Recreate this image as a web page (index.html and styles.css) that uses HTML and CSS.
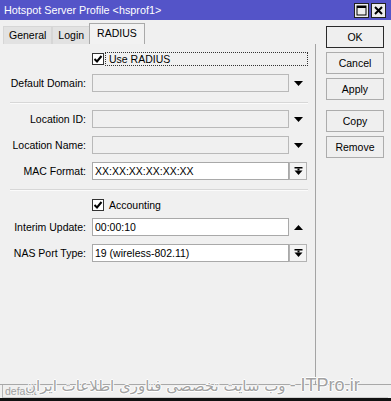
FILE: index.html
```html
<!DOCTYPE html>
<html>
<head>
<meta charset="utf-8">
<link rel="stylesheet" href="styles.css">
</head>
<body>
<div class="window">
  <div class="titlebar">
    <span class="title">Hotspot Server Profile &lt;hsprof1&gt;</span>
    <div class="tbtns">
      <span class="tbtn"><svg width="11" height="11" viewBox="0 0 11 11"><rect x="1" y="1" width="9" height="9" fill="none" stroke="#000" stroke-width="1"/><rect x="1" y="1" width="9" height="2" fill="#000"/></svg></span>
      <span class="tbtn"><svg width="11" height="11" viewBox="0 0 11 11"><path d="M2 2 L9 9 M9 2 L2 9" stroke="#000" stroke-width="2"/></svg></span>
    </div>
  </div>
  <div class="main">
    <div class="left">
      <div class="tabs">
        <span class="tab">General</span><span class="tab">Login</span><span class="tab active">RADIUS</span>
      </div>
      <div class="form">
        <div class="check-row first">
          <span class="cb"><svg width="12" height="12" viewBox="0 0 12 12"><rect x="0.5" y="0.5" width="11" height="11" fill="#fff" stroke="#333"/><path d="M2.5 6 L5 8.5 L9.5 3" fill="none" stroke="#000" stroke-width="2"/></svg></span>
          <span class="cb-label focus">Use RADIUS</span>
        </div>
        <div class="row r1"><span class="lbl">Default Domain:</span><span class="field disabled"></span><span class="slot"><svg width="9" height="5" viewBox="0 0 9 5"><path d="M0 0 H9 L4.5 5 Z" fill="#000"/></svg></span></div>
        <div class="sep s1"></div>
        <div class="row r2"><span class="lbl">Location ID:</span><span class="field disabled"></span><span class="slot"><svg width="9" height="5" viewBox="0 0 9 5"><path d="M0 0 H9 L4.5 5 Z" fill="#000"/></svg></span></div>
        <div class="row"><span class="lbl">Location Name:</span><span class="field disabled"></span><span class="slot"><svg width="9" height="5" viewBox="0 0 9 5"><path d="M0 0 H9 L4.5 5 Z" fill="#000"/></svg></span></div>
        <div class="row"><span class="lbl">MAC Format:</span><span class="field">XX:XX:XX:XX:XX:XX</span><span class="ddbtn"><svg width="9" height="9" viewBox="0 0 9 9"><rect x="0.5" y="0" width="8" height="1.5" fill="#000"/><rect x="3.5" y="1.5" width="2" height="2" fill="#000"/><path d="M0.5 3.5 H8.5 L4.5 8 Z" fill="#000"/></svg></span></div>
        <div class="sep s2"></div>
        <div class="check-row second">
          <span class="cb"><svg width="12" height="12" viewBox="0 0 12 12"><rect x="0.5" y="0.5" width="11" height="11" fill="#fff" stroke="#333"/><path d="M2.5 6 L5 8.5 L9.5 3" fill="none" stroke="#000" stroke-width="2"/></svg></span>
          <span class="cb-label">Accounting</span>
        </div>
        <div class="row r3"><span class="lbl">Interim Update:</span><span class="field">00:00:10</span><span class="slot"><svg width="9" height="5" viewBox="0 0 9 5"><path d="M0 5 H9 L4.5 0 Z" fill="#000"/></svg></span></div>
        <div class="row"><span class="lbl">NAS Port Type:</span><span class="field">19 (wireless-802.11)</span><span class="ddbtn"><svg width="9" height="9" viewBox="0 0 9 9"><rect x="0.5" y="0" width="8" height="1.5" fill="#000"/><rect x="3.5" y="1.5" width="2" height="2" fill="#000"/><path d="M0.5 3.5 H8.5 L4.5 8 Z" fill="#000"/></svg></span></div>
      </div>
    </div>
    <div class="buttons">
      <span class="btn default">OK</span>
      <span class="btn">Cancel</span>
      <span class="btn">Apply</span>
      <span class="btn gap">Copy</span>
      <span class="btn">Remove</span>
    </div>
  </div>
  <div class="status"><span class="status-box">default</span></div>
  <div class="bottom-bar"></div>
  <div class="watermark"><span class="wm-fa">وب سایت تخصصی فناوری اطلاعات ایران</span><span class="wm-en">- ITPro.ir</span></div>
</div>
</body>
</html>
```

FILE: styles.css
```css
html, body {
  margin: 0;
  padding: 0;
}
body {
  width: 391px;
  height: 401px;
  overflow: hidden;
  background: #f0f0f0;
  font-family: "Liberation Sans", Arial, sans-serif;
  font-size: 10.5px;
  color: #000;
}
.window {
  position: relative;
  width: 391px;
  height: 401px;
  display: flex;
  flex-direction: column;
}
.titlebar {
  height: 20px;
  flex: none;
  background: #5454c8;
  display: flex;
  align-items: center;
  padding-left: 4px;
  color: #fff;
}
.title {
  flex: 1;
  font-size: 10.8px;
  line-height: 20px;
}
.tbtns {
  display: flex;
  gap: 2px;
  margin-right: 5px;
}
.tbtn {
  width: 13px;
  height: 13px;
  border: 1px solid #202020;
  background: #ececec;
  display: flex;
  align-items: center;
  justify-content: center;
}
.main {
  height: 364px;
  flex: none;
  display: flex;
}
.left {
  width: 316px;
  display: flex;
  flex-direction: column;
}
.tabs {
  height: 24px;
  flex: none;
  display: flex;
  align-items: flex-end;
  padding-left: 3px;
}
.tab {
  height: 17px;
  line-height: 17px;
  padding: 0 5px;
  border: 1px solid #d6d6d6;
  border-bottom: none;
  background: #e2e2e2;
}
.tab.active {
  height: 19px;
  line-height: 16px;
  padding: 1px 7px 0;
  margin-left: -1px;
  background: #f2f2f2;
  border-color: #a9a9a9;
}
.form {
  flex: 1;
  border-right: 1px solid #a4a4a4;
  display: flex;
  flex-direction: column;
}
.check-row {
  display: flex;
  align-items: center;
  height: 14px;
  padding-left: 92px;
}
.check-row.first { margin-top: 8px; }
.check-row.second { margin-top: 7px; }
.cb {
  width: 12px;
  height: 12px;
  display: flex;
}
.cb-label {
  width: 203px;
  height: 14px;
  box-sizing: border-box;
  margin-left: 1px;
  padding-left: 3px;
  line-height: 13px;
  border: 1px dotted transparent;
}
.cb-label.focus {
  border-color: #333;
}
.row {
  display: flex;
  align-items: center;
  height: 18px;
  margin-top: 8px;
}
.row.r2 { margin-top: 6px; }
.row.r3 { margin-top: 6px; }
.lbl {
  width: 86px;
  margin-right: 6px;
  text-align: right;
  white-space: nowrap;
}
.field {
  width: 197px;
  height: 18px;
  box-sizing: border-box;
  border: 1px solid #a9a9a9;
  background: #fff;
  padding-left: 2px;
  line-height: 16px;
}
.field.disabled {
  background: #f0f0f0;
  border-color: #b9b9b9;
}
.slot {
  width: 18px;
  height: 18px;
  display: flex;
  align-items: center;
  justify-content: center;
}
.ddbtn {
  width: 18px;
  height: 18px;
  box-sizing: border-box;
  border: 1px solid #b3b3b3;
  background: #f4f4f4;
  display: flex;
  align-items: center;
  justify-content: center;
}
.sep {
  margin-left: 10px;
  width: 298px;
  height: 0;
  border-top: 1px solid #d7d7d7;
  border-bottom: 1px solid #fbfbfb;
}
.sep.s1 { margin-top: 10px; }
.sep.s2 { margin-top: 9px; }
.buttons {
  flex: 1;
  display: flex;
  flex-direction: column;
  padding: 6px 0 0 10px;
  gap: 4px;
}
.btn {
  width: 58px;
  height: 22px;
  box-sizing: border-box;
  border: 1px solid #acacac;
  background: #efefef;
  display: flex;
  align-items: center;
  justify-content: center;
}
.btn.default {
  border-color: #2a2a2a;
}
.btn.gap {
  margin-top: 6px;
}
.status {
  height: 14px;
  flex: none;
  border-top: 1px solid #a8a8a8;
  padding-left: 2px;
  box-sizing: border-box;
  display: flex;
}
.status-box {
  flex: 1;
  margin-right: 3px;
  border-left: 1px solid #b5b5b5;
  border-bottom: 1px solid #d0d0d0;
  padding-left: 2px;
  color: #a0a0a0;
  line-height: 13px;
}
.bottom-bar {
  height: 3px;
  flex: none;
  background: #111;
}
.watermark {
  position: absolute;
  left: 25px;
  top: 375px;
  display: flex;
  gap: 4px;
  align-items: baseline;
  line-height: 20px;
  color: #a2a2a2;
  white-space: nowrap;
  text-shadow: 1px 0 0 #fff, -1px 0 0 #fff, 0 1px 0 #fff, 0 -1px 0 #fff;
}
.wm-fa {
  font-family: "DejaVu Sans", sans-serif;
  font-size: 15px;
}
.wm-en {
  font-family: "Liberation Sans", Arial, sans-serif;
  font-size: 18px;
}
```
